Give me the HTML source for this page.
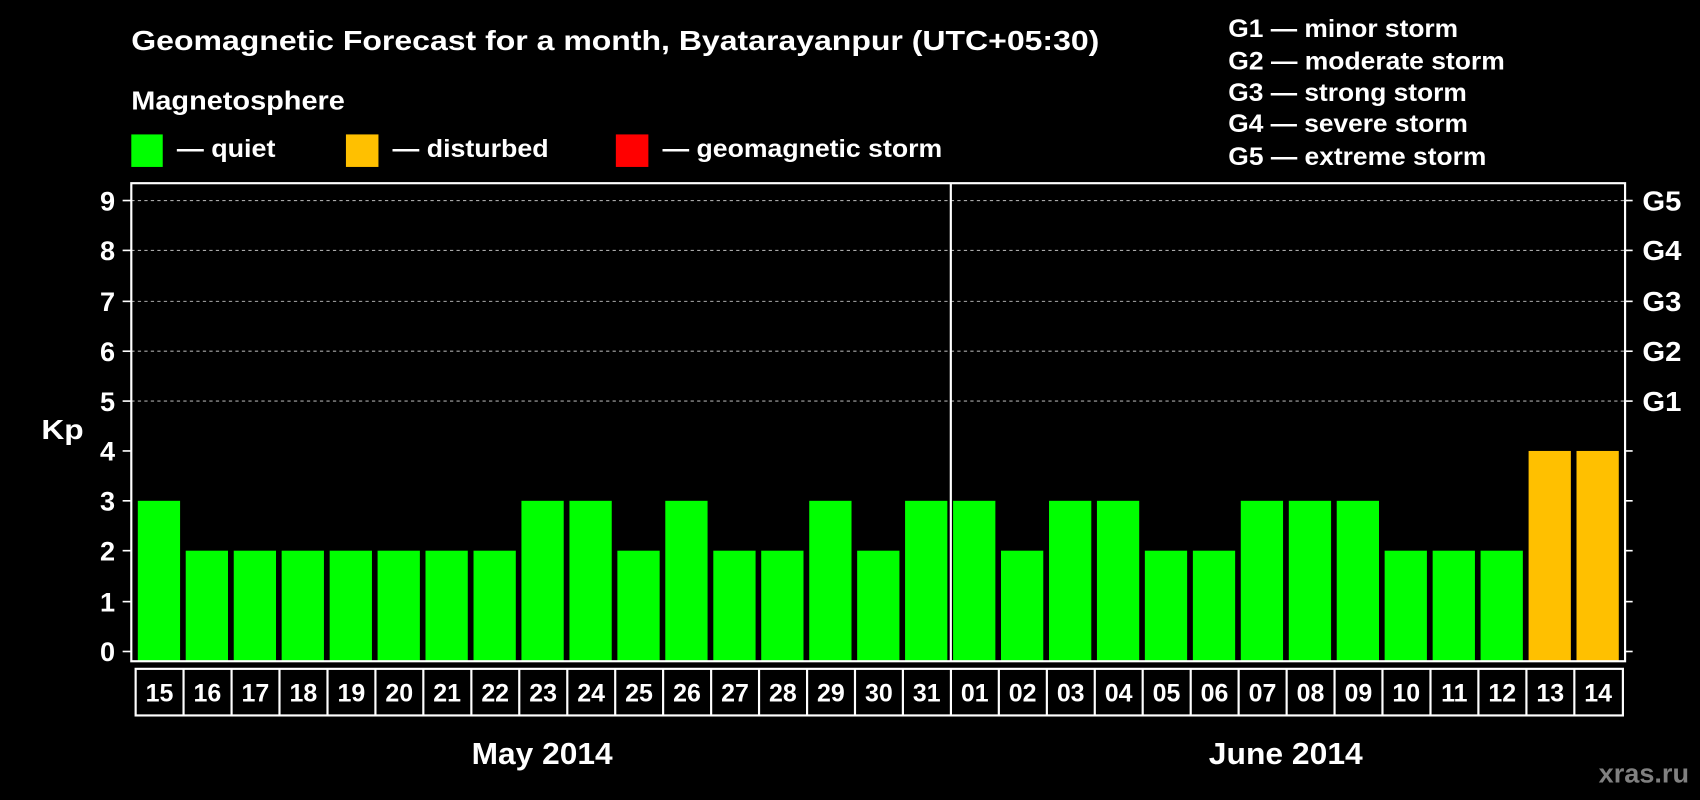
<!DOCTYPE html>
<html><head><meta charset="utf-8"><style>html,body{margin:0;padding:0;background:#000;overflow:hidden}svg{display:block}text{font-family:"Liberation Sans",Arial,sans-serif;font-weight:bold;fill:#fff}</style></head><body>
<svg width="1700" height="800" viewBox="0 0 1568 738" xmlns="http://www.w3.org/2000/svg">
<rect width="1568" height="738" fill="#000"/>
<text x="121" y="46" font-size="26" textLength="893" lengthAdjust="spacingAndGlyphs">Geomagnetic Forecast for a month, Byatarayanpur (UTC+05:30)</text>
<text x="121" y="101" font-size="24" textLength="197" lengthAdjust="spacingAndGlyphs">Magnetosphere</text>
<rect x="121" y="124" width="29" height="30" fill="#00ff00"/>
<text x="163" y="145" font-size="23" textLength="91" lengthAdjust="spacingAndGlyphs">— quiet</text>
<rect x="319" y="124" width="30" height="30" fill="#ffc000"/>
<text x="362" y="145" font-size="23" textLength="144" lengthAdjust="spacingAndGlyphs">— disturbed</text>
<rect x="568" y="124" width="30" height="30" fill="#ff0000"/>
<text x="611" y="145" font-size="23" textLength="258" lengthAdjust="spacingAndGlyphs">— geomagnetic storm</text>
<g font-size="23">
<text x="1133" y="34" textLength="212" lengthAdjust="spacingAndGlyphs">G1 — minor storm</text>
<text x="1133" y="64" textLength="255" lengthAdjust="spacingAndGlyphs">G2 — moderate storm</text>
<text x="1133" y="93" textLength="220" lengthAdjust="spacingAndGlyphs">G3 — strong storm</text>
<text x="1133" y="122" textLength="221" lengthAdjust="spacingAndGlyphs">G4 — severe storm</text>
<text x="1133" y="152" textLength="238" lengthAdjust="spacingAndGlyphs">G5 — extreme storm</text>
</g>
<g stroke="#aaa" stroke-dasharray="3,3" stroke-width="1">
<line x1="121" y1="185" x2="1499" y2="185"/><line x1="121" y1="231" x2="1499" y2="231"/><line x1="121" y1="278" x2="1499" y2="278"/><line x1="121" y1="324" x2="1499" y2="324"/><line x1="121" y1="370" x2="1499" y2="370"/>
</g>
<g fill="#00ff00">
<rect x="127" y="462" width="39" height="148"/><rect x="171.2" y="508" width="39" height="102"/><rect x="215.5" y="508" width="39" height="102"/><rect x="259.7" y="508" width="39" height="102"/><rect x="304" y="508" width="39" height="102"/><rect x="348.2" y="508" width="39" height="102"/><rect x="392.4" y="508" width="39" height="102"/><rect x="436.7" y="508" width="39" height="102"/><rect x="480.9" y="462" width="39" height="148"/><rect x="525.2" y="462" width="39" height="148"/><rect x="569.4" y="508" width="39" height="102"/><rect x="613.6" y="462" width="39" height="148"/><rect x="657.9" y="508" width="39" height="102"/><rect x="702.1" y="508" width="39" height="102"/><rect x="746.4" y="462" width="39" height="148"/><rect x="790.6" y="508" width="39" height="102"/><rect x="834.8" y="462" width="39" height="148"/><rect x="879.1" y="462" width="39" height="148"/><rect x="923.3" y="508" width="39" height="102"/><rect x="967.6" y="462" width="39" height="148"/><rect x="1011.8" y="462" width="39" height="148"/><rect x="1056" y="508" width="39" height="102"/><rect x="1100.3" y="508" width="39" height="102"/><rect x="1144.5" y="462" width="39" height="148"/><rect x="1188.8" y="462" width="39" height="148"/><rect x="1233" y="462" width="39" height="148"/><rect x="1277.2" y="508" width="39" height="102"/><rect x="1321.5" y="508" width="39" height="102"/><rect x="1365.7" y="508" width="39" height="102"/>
</g>
<g fill="#ffc000"><rect x="1410" y="416" width="39" height="194"/><rect x="1454.2" y="416" width="39" height="194"/></g>
<rect x="121" y="169" width="1378" height="441" fill="none" stroke="#fff" stroke-width="2"/>
<line x1="877" y1="169" x2="877" y2="610" stroke="#fff" stroke-width="2"/>
<g stroke="#fff" stroke-width="1.5">
<line x1="113" y1="185" x2="121" y2="185"/><line x1="113" y1="231" x2="121" y2="231"/><line x1="113" y1="278" x2="121" y2="278"/><line x1="113" y1="324" x2="121" y2="324"/><line x1="113" y1="370" x2="121" y2="370"/><line x1="113" y1="416" x2="121" y2="416"/><line x1="113" y1="462" x2="121" y2="462"/><line x1="113" y1="508" x2="121" y2="508"/><line x1="113" y1="555" x2="121" y2="555"/><line x1="113" y1="601" x2="121" y2="601"/>
<line x1="1499" y1="185" x2="1506" y2="185"/><line x1="1499" y1="231" x2="1506" y2="231"/><line x1="1499" y1="278" x2="1506" y2="278"/><line x1="1499" y1="324" x2="1506" y2="324"/><line x1="1499" y1="370" x2="1506" y2="370"/><line x1="1499" y1="416" x2="1506" y2="416"/><line x1="1499" y1="462" x2="1506" y2="462"/><line x1="1499" y1="508" x2="1506" y2="508"/><line x1="1499" y1="555" x2="1506" y2="555"/><line x1="1499" y1="601" x2="1506" y2="601"/>
</g>
<g font-size="25" text-anchor="end">
<text x="106" y="194">9</text><text x="106" y="240">8</text><text x="106" y="287">7</text><text x="106" y="333">6</text><text x="106" y="379">5</text><text x="106" y="425">4</text><text x="106" y="471">3</text><text x="106" y="517">2</text><text x="106" y="564">1</text><text x="106" y="610">0</text>
</g>
<g font-size="26">
<text x="1515" y="194" textLength="36" lengthAdjust="spacingAndGlyphs">G5</text><text x="1515" y="240" textLength="36" lengthAdjust="spacingAndGlyphs">G4</text><text x="1515" y="287" textLength="36" lengthAdjust="spacingAndGlyphs">G3</text><text x="1515" y="333" textLength="36" lengthAdjust="spacingAndGlyphs">G2</text><text x="1515" y="379" textLength="36" lengthAdjust="spacingAndGlyphs">G1</text>
</g>
<text x="38" y="405" font-size="26" textLength="39" lengthAdjust="spacingAndGlyphs">Kp</text>
<g fill="none" stroke="#fff" stroke-width="2">
<rect x="125" y="617" width="1372" height="43"/>
<path d="M169.2 617V660M213.5 617V660M257.7 617V660M302 617V660M346.2 617V660M390.4 617V660M434.7 617V660M478.9 617V660M523.2 617V660M567.4 617V660M611.6 617V660M655.9 617V660M700.1 617V660M744.4 617V660M788.6 617V660M832.8 617V660M877.1 617V660M921.3 617V660M965.6 617V660M1009.8 617V660M1054 617V660M1098.3 617V660M1142.5 617V660M1186.8 617V660M1231 617V660M1275.2 617V660M1319.5 617V660M1363.7 617V660M1408 617V660M1452.2 617V660"/>
</g>
<g font-size="23" text-anchor="middle">
<text x="147" y="647">15</text><text x="191.2" y="647">16</text><text x="235.5" y="647">17</text><text x="279.7" y="647">18</text><text x="324" y="647">19</text><text x="368.2" y="647">20</text><text x="412.4" y="647">21</text><text x="456.7" y="647">22</text><text x="500.9" y="647">23</text><text x="545.2" y="647">24</text><text x="589.4" y="647">25</text><text x="633.6" y="647">26</text><text x="677.9" y="647">27</text><text x="722.1" y="647">28</text><text x="766.4" y="647">29</text><text x="810.6" y="647">30</text><text x="854.8" y="647">31</text><text x="899.1" y="647">01</text><text x="943.3" y="647">02</text><text x="987.6" y="647">03</text><text x="1031.8" y="647">04</text><text x="1076" y="647">05</text><text x="1120.3" y="647">06</text><text x="1164.5" y="647">07</text><text x="1208.8" y="647">08</text><text x="1253" y="647">09</text><text x="1297.2" y="647">10</text><text x="1341.5" y="647">11</text><text x="1385.7" y="647">12</text><text x="1430" y="647">13</text><text x="1474.2" y="647">14</text>
</g>
<text x="500" y="705" font-size="28" text-anchor="middle" textLength="130" lengthAdjust="spacingAndGlyphs">May 2014</text>
<text x="1186" y="705" font-size="28" text-anchor="middle" textLength="142" lengthAdjust="spacingAndGlyphs">June 2014</text>
<text x="1558" y="722" font-size="25" text-anchor="end" style="fill:#808080">xras.ru</text>
</svg>
</body></html>
